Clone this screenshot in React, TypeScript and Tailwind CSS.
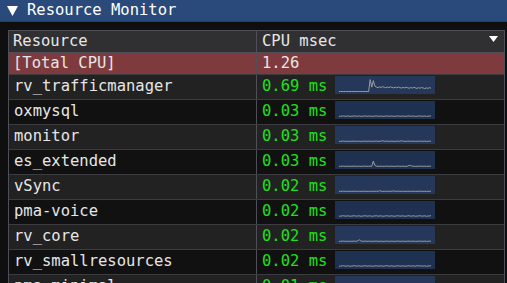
import React from "react";

type Row = { name: string; ms: string; data: number[] };

function gen(base: number, spikes: Record<number, number>, len = 60, noise = 0.3): number[] {
  const out: number[] = [];
  for (let i = 0; i < len; i++) {
    const n = ((i * 37) % 7) / 7;
    out.push(spikes[i] !== undefined ? spikes[i] : base + n * noise);
  }
  return out;
}

const traffic: number[] = (() => {
  const a: number[] = [];
  for (let i = 0; i < 60; i++) {
    if (i < 20) a.push(0);
    else if (i === 20) a.push(11);
    else if (i === 21) a.push(4);
    else if (i === 22) a.push(10);
    else if (i === 23) a.push(5);
    else {
      const n = ((i * 13) % 5) / 5;
      a.push(3.6 - (i - 24) * 0.03 + n * 1.2);
    }
  }
  return a;
})();

const rows: Row[] = [
  { name: "rv_trafficmanager", ms: "0.69 ms", data: traffic },
  { name: "oxmysql", ms: "0.03 ms", data: gen(0.1, {}, 60, 0.5) },
  { name: "monitor", ms: "0.03 ms", data: gen(0.1, { 28: 0.8, 40: 0.7 }, 60, 0.3) },
  { name: "es_extended", ms: "0.03 ms", data: gen(0.1, { 22: 5, 23: 1, 45: 1, 46: 0.8 }, 60, 0.3) },
  { name: "vSync", ms: "0.02 ms", data: gen(0.1, { 26: 0.8, 35: 0.6 }, 60, 0.2) },
  { name: "pma-voice", ms: "0.02 ms", data: gen(0.2, {}, 60, 0.6) },
  { name: "rv_core", ms: "0.02 ms", data: gen(0.1, { 12: 0.5, 13: 1.6, 14: 0.5 }, 60, 0.3) },
  { name: "rv_smallresources", ms: "0.02 ms", data: gen(0.2, { 10: 0.8, 30: 0.7, 50: 0.8 }, 60, 0.6) },
  { name: "pma-minimal", ms: "0.01 ms", data: gen(0.1, {}, 60, 0.3) },
];

function Spark({ data, light }: { data: number[]; light: boolean }) {
  const w = 100;
  const h = 18;
  const max = 11.5;
  const x0 = 4;
  const x1 = 96;
  const top = 3;
  const bottom = 15.5;
  const pts = data
    .map((v, i) => {
      const x = x0 + ((x1 - x0) * i) / (data.length - 1);
      const y = bottom - (Math.min(v, max) / max) * (bottom - top);
      return `${x.toFixed(2)},${y.toFixed(2)}`;
    })
    .join(" ");
  return (
    <div className={`w-[100px] h-[18px] shrink-0 ${light ? "bg-[#25385a]" : "bg-[#1f3151]"}`}>
      <svg width={w} height={h} viewBox={`0 0 ${w} ${h}`}>
        <polyline points={pts} fill="none" stroke="#9c9c9c" strokeWidth="1" />
      </svg>
    </div>
  );
}

export default function App() {
  return (
    <div className="w-[507px] h-[283px] overflow-hidden bg-[#0f0f0f] font-['DejaVu_Sans_Mono',monospace] text-[15.5px] text-[#e6e6e6] relative">
      <div className="h-[22px] bg-[#294a7a] flex items-center pl-[7px] border-b border-[#3a3a44]">
        <svg width="11" height="10" viewBox="0 0 11 10" className="mr-[9px]">
          <polygon points="0,0 11,0 5.5,10" fill="#ffffff" />
        </svg>
        <span className="text-white leading-none">Resource Monitor</span>
      </div>
      <div className="h-[8px]" />
      <div className="ml-[8px] w-[497px] border border-[#4f4f59]">
        <div className="grid grid-cols-[248px_1fr] h-[22px] bg-[#303033] border-b border-[#4f4f59]">
          <div className="border-r border-[#4f4f59] pl-[4px] pt-[1px] flex items-center leading-none">Resource</div>
          <div className="pl-[5px] pr-[6px] pt-[1px] flex items-center justify-between leading-none">
            <span>CPU msec</span>
            <svg width="9" height="6" viewBox="0 0 9 6" className="mb-[7px]">
              <polygon points="0,0 9,0 4.5,6" fill="#ffffff" />
            </svg>
          </div>
        </div>
        <div className="grid grid-cols-[248px_1fr] h-[22px] bg-[#7e3a3c] border-b border-[#3b3b40]">
          <div className="border-r border-[#4f4f59] pl-[4px] flex items-center leading-none">[Total CPU]</div>
          <div className="pl-[5px] flex items-center leading-none">1.26</div>
        </div>
        {rows.map((r, i) => (
          <div
            key={r.name}
            className={`grid grid-cols-[248px_1fr] h-[25px] border-b border-[#3b3b40] ${i % 2 === 0 ? "bg-[#222222]" : "bg-[#111111]"}`}
          >
            <div className="border-r border-[#4f4f59] pl-[5px] pt-[1px] flex items-start leading-[20px]">{r.name}</div>
            <div className="pl-[5px] pt-[1px] flex items-start">
              <span className="w-[73px] text-[#1ee01e] leading-[20px]">{r.ms}</span>
              <Spark data={r.data} light={i % 2 === 0} />
            </div>
          </div>
        ))}
      </div>
    </div>
  );
}
